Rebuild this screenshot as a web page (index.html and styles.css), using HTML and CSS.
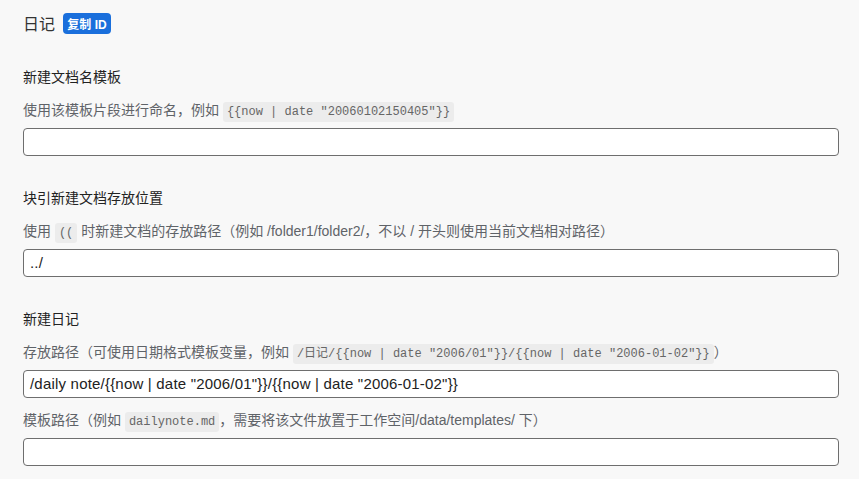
FILE: index.html
```html
<!DOCTYPE html>
<html lang="zh-CN">
<head>
<meta charset="utf-8">
<title>日记</title>
<link rel="stylesheet" href="styles.css">
</head>
<body>
<div class="page">
  <div class="header">
    <span class="title">日记</span>
    <span class="badge">复制 ID</span>
  </div>

  <div class="section">
    <div class="label">新建文档名模板</div>
    <div class="desc">使用该模板片段进行命名，例如 <code>{{now | date "20060102150405"}}</code></div>
    <div class="input"></div>
  </div>

  <div class="section">
    <div class="label">块引新建文档存放位置</div>
    <div class="desc">使用 <code>((</code> 时新建文档的存放路径（例如 /folder1/folder2/，不以 / 开头则使用当前文档相对路径）</div>
    <div class="input">../</div>
  </div>

  <div class="section">
    <div class="label">新建日记</div>
    <div class="desc">存放路径（可使用日期格式模板变量，例如 <code>/日记/{{now | date "2006/01"}}/{{now | date "2006-01-02"}}</code>）</div>
    <div class="input">/daily note/{{now | date "2006/01"}}/{{now | date "2006-01-02"}}</div>
    <div class="desc desc-next">模板路径（例如 <code>dailynote.md</code>，需要将该文件放置于工作空间/data/templates/ 下）</div>
    <div class="input"></div>
  </div>
</div>
</body>
</html>
```

FILE: styles.css
```css
html, body {
  margin: 0;
  padding: 0;
  background: #f8f8f8;
}

body {
  font-family: "Liberation Sans", "Noto Sans CJK SC", sans-serif;
  color: #222;
}

.page {
  display: flex;
  flex-direction: column;
  padding: 11px 20px 0 23px;
}

.header {
  display: flex;
  align-items: center;
  gap: 8px;
  height: 24px;
}

.title {
  font-size: 16px;
  color: #333;
  font-family: "Noto Sans CJK SC", sans-serif;
  line-height: 24px;
}

.badge {
  display: inline-flex;
  align-items: center;
  justify-content: center;
  width: 48px;
  height: 21px;
  box-sizing: border-box;
  background: #1a6fdc;
  color: #fff;
  font-size: 12px;
  font-weight: bold;
  border-radius: 4px;
  font-family: "Liberation Sans", "Noto Sans CJK SC", sans-serif;
}

.section {
  display: flex;
  flex-direction: column;
  margin-top: 32px;
}

.label {
  font-size: 14px;
  line-height: 20px;
  height: 20px;
  color: #222;
  margin-bottom: 13px;
}

.desc {
  font-size: 14px;
  line-height: 20px;
  height: 20px;
  color: #5f6368;
  margin-bottom: 8px;
  white-space: nowrap;
}

.desc-next {
  margin-top: 12px;
}

code {
  font-family: "Liberation Mono", monospace;
  font-size: 12px;
  line-height: 14px;
  color: #666;
  background: #ececec;
  border-radius: 3px;
  padding: 3px 4px;
}

.input {
  height: 28px;
  flex-shrink: 0;
  box-sizing: border-box;
  border: 1px solid #6e6e6e;
  border-radius: 4px;
  background: #fff;
  padding: 0 6px;
  font-size: 15px;
  letter-spacing: 0.2px;
  line-height: 26px;
  color: #222;
  white-space: nowrap;
}
```
